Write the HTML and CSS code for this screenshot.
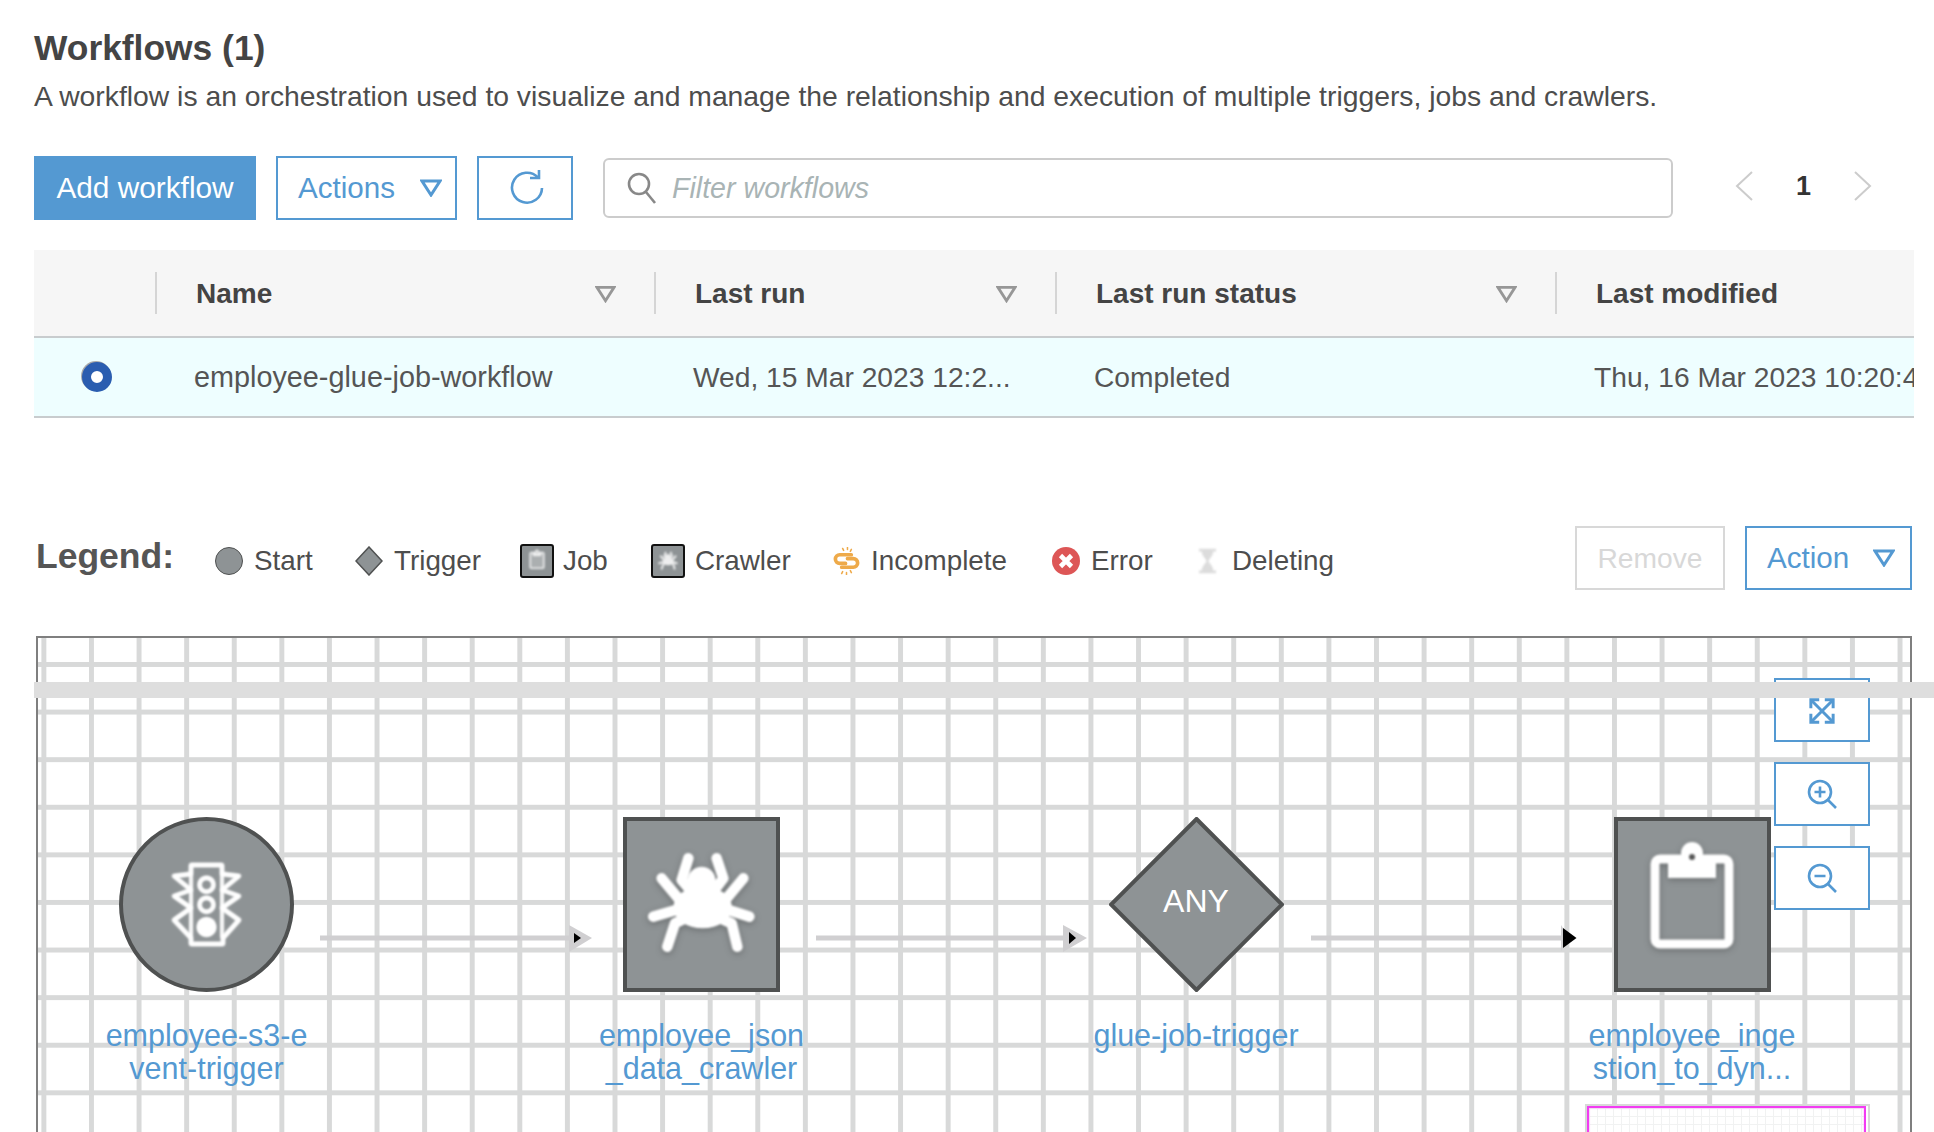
FILE: index.html
```html
<!DOCTYPE html>
<html lang="en">
<head>
    <meta charset="UTF-8">
    <title>Workflows</title>
    <link rel="stylesheet" href="styles.css">
</head>
<body>
    <!-- shared icons -->
    <svg class="icon-defs" xmlns="http://www.w3.org/2000/svg">
        <symbol id="caret" viewBox="0 0 22 18">
            <path d="M2 2h18L11 16z" fill="none" stroke="currentColor" stroke-width="3"/>
        </symbol>
        <symbol id="spider" viewBox="10 111 469 525">
            <g fill="none" stroke="#fff" stroke-width="32" stroke-linecap="round" stroke-linejoin="round">
                <path d="M205 235 185 300 215 335"/>
                <path d="M290 235 310 295 280 335"/>
                <path d="M125 295 175 355"/>
                <path d="M370 295 320 355"/>
                <path d="M100 410 185 385"/>
                <path d="M388 410 310 385"/>
                <path d="M142 500 165 430 205 410"/>
                <path d="M352 500 335 430 290 410"/>
            </g>
            <circle cx="245" cy="302" r="42" fill="#fff"/>
            <ellipse cx="248" cy="382" rx="88" ry="63" fill="#fff"/>
        </symbol>
        <symbol id="clipboard" viewBox="0 0 156 175">
            <rect x="41" y="42" width="74" height="85" rx="5" stroke="#fff" stroke-width="9"/>
            <path d="M54 38h48v23H54z" fill="#fff"/>
            <circle cx="78" cy="36" r="11" fill="#fff"/>
            <circle cx="78" cy="40" r="3" fill="#555"/>
        </symbol>
    </svg>

    <main class="page">
        <h1>Workflows (1)</h1>
        <p class="intro">A workflow is an orchestration used to visualize and manage the relationship and execution of multiple triggers, jobs and crawlers.</p>

        <div class="toolbar">
            <button class="btn btn-primary btn-add">Add workflow</button>
            <button class="btn btn-actions">Actions <svg class="caret"><use href="#caret"/></svg></button>
            <button class="btn btn-refresh">
                <svg width="36" height="36" viewBox="0 0 36 36" fill="none" stroke="currentColor" stroke-width="2.6">
                    <path d="M29 7.5A15 15 0 1 0 33 18"/>
                    <path d="M21 8h9V0"/>
                </svg>
            </button>
            <div class="search">
                <svg width="30" height="32" viewBox="0 0 30 32" fill="none" stroke="#888" stroke-width="2.6">
                    <circle cx="12" cy="12" r="10"/>
                    <path d="M19 20l9 11"/>
                </svg>
                <span class="search-hint">Filter workflows</span>
            </div>
            <div class="pager">
                <svg width="18" height="30" viewBox="0 0 18 30" fill="none" stroke="#ccc" stroke-width="2"><path d="M17 1 2 15l15 14"/></svg>
                <span class="pager-num">1</span>
                <svg width="18" height="30" viewBox="0 0 18 30" fill="none" stroke="#ccc" stroke-width="2"><path d="M1 1l15 14L1 29"/></svg>
            </div>
        </div>

        <div class="table">
            <div class="head-row">
                <div class="head-cell head-first"></div>
                <div class="head-cell"><b>Name</b><svg class="sort"><use href="#caret"/></svg></div>
                <div class="head-cell"><b>Last run</b><svg class="sort"><use href="#caret"/></svg></div>
                <div class="head-cell"><b>Last run status</b><svg class="sort"><use href="#caret"/></svg></div>
                <div class="head-cell"><b>Last modified</b></div>
            </div>
            <div class="body-row">
                <div class="cell cell-radio"><span class="radio"></span></div>
                <div class="cell cell-name">employee-glue-job-workflow</div>
                <div class="cell">Wed, 15 Mar 2023 12:2...</div>
                <div class="cell">Completed</div>
                <div class="cell">Thu, 16 Mar 2023 10:20:4</div>
            </div>
        </div>

        <div class="legend">
            <strong class="legend-title">Legend:</strong>
            <span class="legend-item item-start"><span class="dot"></span>Start</span>
            <span class="legend-item item-trigger"><svg width="28" height="30" viewBox="0 0 28 30"><path d="M14 1 27 15 14 29 1 15z" fill="#8e9395" stroke="#4f5151" stroke-width="1.5"/></svg>Trigger</span>
            <span class="legend-item item-job"><span class="tile"><svg class="tile-icon"><use href="#clipboard"/></svg></span>Job</span>
            <span class="legend-item item-crawler"><span class="tile"><svg class="tile-icon"><use href="#spider"/></svg></span>Crawler</span>
            <span class="legend-item item-incomplete">
                <svg class="soft" width="29" height="28" viewBox="0 0 30 28" fill="none" stroke="#eeaa4a" stroke-width="3.800" stroke-linecap="round">
                    <path d="M20 7.500H8a4.500 4.500 0 0 0 0 9h6"/>
                    <path d="M10 20.500h12a4.500 4.500 0 0 0 0-9h-6"/>
                    <path d="M11 1l1 2M16 0v2M20 2l-1 2M10 27l1-2M15 28v-2M20 26l-1-2" stroke-width="1.600"/>
                </svg>Incomplete
            </span>
            <span class="legend-item item-error">
                <svg width="28" height="28" viewBox="0 0 28 28">
                    <circle cx="14" cy="14" r="14" fill="#dd5656"/>
                    <path d="M8.500 8.500l11 11M19.500 8.500l-11 11" stroke="#fff" stroke-width="4.600"/>
                </svg>Error
            </span>
            <span class="legend-item item-deleting">
                <svg class="soft-more" width="19" height="28" viewBox="0 0 20 28" fill="#dcdcdc">
                    <path d="M1 1h18v3h-3c0 5-4 7-5 10 1 3 5 5 5 10h3v3H1v-3h3c0-5 4-7 5-10-1-3-5-5-5-10H1z"/>
                </svg>Deleting
            </span>
            <div class="legend-actions">
                <button class="btn btn-disabled">Remove</button>
                <button class="btn btn-action">Action <svg class="caret"><use href="#caret"/></svg></button>
            </div>
        </div>

        <div class="canvas">
            <svg class="links" xmlns="http://www.w3.org/2000/svg">
                <g fill="#d0cfd1">
                    <path d="M282 297.500h250v5H282z"/>
                    <path d="M531 287l23 13-23 14z"/>
                    <path d="M778 297.500h248v5H778z"/>
                    <path d="M1025 287l24 13-24 14z"/>
                    <path d="M1273 297.500h252v5h-252z"/>
                    <path d="M1523 287l8 13-8 13z"/>
                </g>
                <path d="M536 295l7 5-7 5z"/>
                <path d="M1031 294l7 6-7 6z"/>
                <path d="M1525 290l13.500 10-13.500 10z"/>
            </svg>

            <div class="node node-start">
                <div class="shape shape-circle">
                    <svg class="soft light-up" width="69" height="85" viewBox="-2 -3 69 85" fill="none" stroke="#fff" stroke-width="3.400" stroke-linejoin="round">
                        <path d="M17 0h31v9l17 2-17 14 17 6-17 12 17 12-16 18v6H17v-6L0 55l17-12L0 31l17-6L0 11l17-2z"/>
                        <path d="M17 9v64M48 9v64" stroke-width="2.600"/>
                        <circle cx="32.500" cy="19.700" r="7"/>
                        <circle cx="32.500" cy="39.700" r="7"/>
                        <circle cx="32.500" cy="62" r="9.500" fill="#fff" stroke="none"/>
                    </svg>
                </div>
                <a class="node-label">employee-s3-e<br>vent-trigger</a>
            </div>

            <div class="node node-crawler">
                <div class="shape shape-box">
                    <svg class="glow" width="157" height="175"><use href="#spider"/></svg>
                </div>
                <a class="node-label">employee_json<br>_data_crawler</a>
            </div>

            <div class="node node-trigger">
                <div class="shape shape-diamond">
                    <svg class="diamond" viewBox="0 0 175 175">
                        <path d="M87.500 2 173 87.500 87.500 173 2 87.500z" fill="#8e9395" stroke="#4f5151" stroke-width="4"/>
                    </svg>
                    <span class="any">ANY</span>
                </div>
                <a class="node-label">glue-job-trigger</a>
            </div>

            <div class="node node-job">
                <div class="shape shape-box">
                    <svg class="glow" width="156" height="175"><use href="#clipboard"/></svg>
                </div>
                <a class="node-label">employee_inge<br>stion_to_dyn...</a>
            </div>

            <div class="zoom-tools">
                <button class="zoom-btn">
                    <svg width="26" height="26" viewBox="0 0 28 28" fill="none" stroke="currentColor" stroke-width="3.200">
                        <path d="M3 3l22 22M25 3 3 25"/>
                        <path d="M2 11V2h9M17 2h9v9M26 17v9h-9M11 26H2v-9"/>
                    </svg>
                </button>
                <button class="zoom-btn">
                    <svg width="30" height="30" viewBox="0 0 30 30" fill="none" stroke="currentColor" stroke-width="2.600">
                        <circle cx="13" cy="13" r="11"/>
                        <path d="M21 21l8 8M7.500 13h11M13 7.500v11"/>
                    </svg>
                </button>
                <button class="zoom-btn">
                    <svg width="30" height="30" viewBox="0 0 30 30" fill="none" stroke="currentColor" stroke-width="2.600">
                        <circle cx="13" cy="13" r="11"/>
                        <path d="M21 21l8 8M7.500 13h11"/>
                    </svg>
                </button>
            </div>

            <div class="minimap"><div class="minimap-view"></div></div>
            <div class="splitter"></div>
        </div>
    </main>
</body>
</html>
```

FILE: styles.css
```css
:root {
    --blue: #5499d2;
    --text: #4d4d4d;
    --node-fill: #8e9395;
    --node-line: #4f5151;
    --grid: #d8d9d9;
}

html, body {
    height: 100%;
}

body {
    margin: 0;
    overflow: hidden;
    background: #fff;
    color: var(--text);
    font-family: "Liberation Sans", Arial, sans-serif;
}

.icon-defs {
    display: none;
}

.page {
    padding: 28px 20px 0 34px;
}

h1 {
    margin: 0;
    font-size: 35.400px;
    line-height: 40px;
    font-weight: 700;
    color: #444;
}

.intro {
    margin: 10px 0 0;
    font-size: 28.300px;
    line-height: 36px;
    white-space: nowrap;
}

/* buttons */
.btn {
    box-sizing: border-box;
    height: 64px;
    margin: 0;
    padding: 0;
    border: 2px solid var(--blue);
    border-radius: 0;
    background: #fff;
    color: var(--blue);
    font: inherit;
    font-size: 29.600px;
    display: flex;
    align-items: center;
    justify-content: center;
}

.btn-primary {
    background: var(--blue);
    color: #fff;
}

.btn-add { width: 222px; font-size: 29.800px; }
.btn-refresh { width: 96px; padding-left: 3px; }

.btn-actions {
    width: 181px;
    justify-content: flex-start;
    padding-left: 20px;
}

.caret {
    width: 22px;
    height: 18px;
    margin-left: 25px;
}

.toolbar {
    display: flex;
    align-items: center;
    margin-top: 42px;
    gap: 20px;
}

.search {
    box-sizing: border-box;
    width: 1070px;
    height: 60px;
    margin-left: 10px;
    padding-left: 22px;
    display: flex;
    align-items: center;
    gap: 15px;
    border: 2px solid #ccc;
    border-radius: 6px;
}

.search-hint {
    font-size: 28.600px;
    font-style: italic;
    color: #a9b4b5;
}

.pager {
    display: flex;
    align-items: center;
    gap: 43px;
    margin: -4px 0 0 42px;
}

.pager-num {
    font-size: 27px;
    font-weight: 700;
    color: #333;
}

/* table */
.table {
    margin-top: 30px;
    width: 1880px;
    overflow: hidden;
}

.head-row, .body-row {
    display: grid;
    grid-template-columns: 121px 499px 401px 500px 359px;
}

.head-row {
    box-sizing: border-box;
    height: 88px;
    align-items: center;
    background: #f6f6f6;
    border-bottom: 2px solid #c8ccce;
}

.head-cell {
    box-sizing: border-box;
    height: 42px;
    padding: 2px 38px 0 39px;
    display: flex;
    align-items: center;
    justify-content: space-between;
    border-left: 2px solid #d5d5d5;
    font-size: 28px;
    white-space: nowrap;
    color: #444;
}

.head-first {
    border-left: 0;
}

.sort {
    width: 21px;
    height: 18px;
    color: #979797;
}

.body-row {
    box-sizing: border-box;
    height: 80px;
    background: #eefeff;
    border-bottom: 2px solid #c8ccce;
    font-size: 28.200px;
    color: #555;
}

.cell {
    display: flex;
    align-items: center;
    padding-left: 39px;
    overflow: hidden;
    white-space: nowrap;
}

.cell-name {
    font-size: 28.800px;
}

.cell-radio {
    padding-left: 48px;
}

.radio {
    box-sizing: border-box;
    width: 30px;
    height: 30px;
    border: 9px solid #2a5db0;
    border-radius: 50%;
    background: #fff;
    box-shadow: -1px -1px 0 #a9a9a9;
}

/* legend */
.legend {
    width: 1878px;
    height: 64px;
    margin-top: 108px;
    display: flex;
    align-items: center;
    font-size: 27.800px;
    white-space: nowrap;
}

.legend-title {
    box-sizing: border-box;
    width: 181px;
    margin-top: -4px;
    padding-left: 2px;
    font-size: 35.500px;
    color: #555;
}

.legend-item {
    box-sizing: border-box;
    display: flex;
    align-items: center;
    gap: 11px;
    padding-top: 5px;
}

.item-start { width: 140px; }
.item-trigger { width: 165px; }
.item-job { width: 131px; gap: 9px; }
.item-crawler { width: 181px; gap: 10px; }
.item-incomplete { width: 220px; gap: 10px; }
.item-error { width: 146px; }
.item-deleting { gap: 15px; }

.dot {
    box-sizing: border-box;
    width: 28px;
    height: 28px;
    border-radius: 50%;
    background: var(--node-fill);
    border: 1.500px solid var(--node-line);
}

.tile {
    box-sizing: border-box;
    width: 34px;
    height: 34px;
    display: flex;
    align-items: center;
    justify-content: center;
    background: var(--node-fill);
    border: 2px solid #111;
    border-radius: 3px;
}

.tile-icon {
    flex: none;
    width: 32px;
    height: 32px;
    fill: rgba(255, 255, 255, .3);
    opacity: .85;
    filter: blur(.8px);
}

.soft {
    filter: blur(.7px);
}

.soft-more {
    filter: blur(1px);
}

.light-up {
    filter: blur(.8px) drop-shadow(0 0 1px #fff);
}

.glow {
    fill: none;
    filter: blur(.9px) drop-shadow(0 2px 3px rgba(0, 0, 0, .25));
}

.legend-actions {
    margin-left: auto;
    display: flex;
    gap: 20px;
}

.btn-disabled {
    width: 150px;
    border-color: #d8d8d8;
    color: #d8d8d8;
    font-size: 28.200px;
}

.btn-action {
    width: 167px;
    justify-content: flex-start;
    padding-left: 20px;
}

.btn-action .caret {
    margin-left: 24px;
}

/* workflow graph */
.canvas {
    position: relative;
    height: 700px;
    margin: 46px 2px 0 2px;
    border: 2px solid #7f7f7f;
    background-color: #fff;
    background-image:
        linear-gradient(to right, var(--grid) 5px, transparent 5px),
        linear-gradient(to bottom, var(--grid) 5px, transparent 5px);
    background-size: 47.600px 47.600px;
    background-position: 3.400px 24px;
}

.links {
    position: absolute;
    top: 0;
    left: 0;
    width: 100%;
    height: 100%;
}

.node {
    position: absolute;
    top: 179px;
    width: 240px;
    display: flex;
    flex-direction: column;
    align-items: center;
}

.node-start { left: 48.500px; }
.node-crawler { left: 543.500px; }
.node-trigger { left: 1038px; }
.node-job { left: 1534px; }

.shape {
    box-sizing: border-box;
    height: 175px;
    display: flex;
    align-items: center;
    justify-content: center;
}

.shape-circle {
    width: 175px;
    border-radius: 50%;
    background: var(--node-fill);
    border: 4px solid var(--node-line);
}

.shape-box {
    width: 157px;
    background: var(--node-fill);
    border: 4px solid var(--node-line);
}

.shape-box svg {
    flex: none;
}

.shape-diamond {
    position: relative;
    width: 175px;
}

.diamond {
    width: 175px;
    height: 175px;
}

.any {
    position: absolute;
    top: 66px;
    left: 0;
    right: 0;
    text-align: center;
    font-size: 32px;
    line-height: 36px;
    color: #fff;
}

.node-label {
    margin-top: 27px;
    text-align: center;
    font-size: 30.500px;
    line-height: 33px;
    color: var(--blue);
}

.zoom-tools {
    position: absolute;
    top: 40px;
    right: 40px;
    display: flex;
    flex-direction: column;
    gap: 20px;
}

.zoom-btn {
    box-sizing: border-box;
    width: 96px;
    height: 64px;
    padding: 0;
    display: flex;
    align-items: center;
    justify-content: center;
    border: 2px solid var(--blue);
    background: #fff;
    color: var(--blue);
}

.zoom-btn:first-child svg {
    margin-top: 2px;
}

.minimap {
    position: absolute;
    left: 1547px;
    top: 466px;
    box-sizing: border-box;
    width: 285px;
    height: 100px;
    background: #fff;
    border: 2px solid #d8d8d8;
}

.minimap-view {
    box-sizing: border-box;
    height: 100%;
    margin-right: 2px;
    border: 2px solid #f23cf2;
    box-shadow: inset 0 0 2px #f8a0f8;
    background-image:
        linear-gradient(to right, #f1f2f2 1px, transparent 1px),
        linear-gradient(to bottom, #f1f2f2 1px, transparent 1px);
    background-size: 8px 8px;
}

.splitter {
    position: absolute;
    top: 44px;
    left: -4px;
    right: -24px;
    height: 16px;
    background: #dedede;
}
```
